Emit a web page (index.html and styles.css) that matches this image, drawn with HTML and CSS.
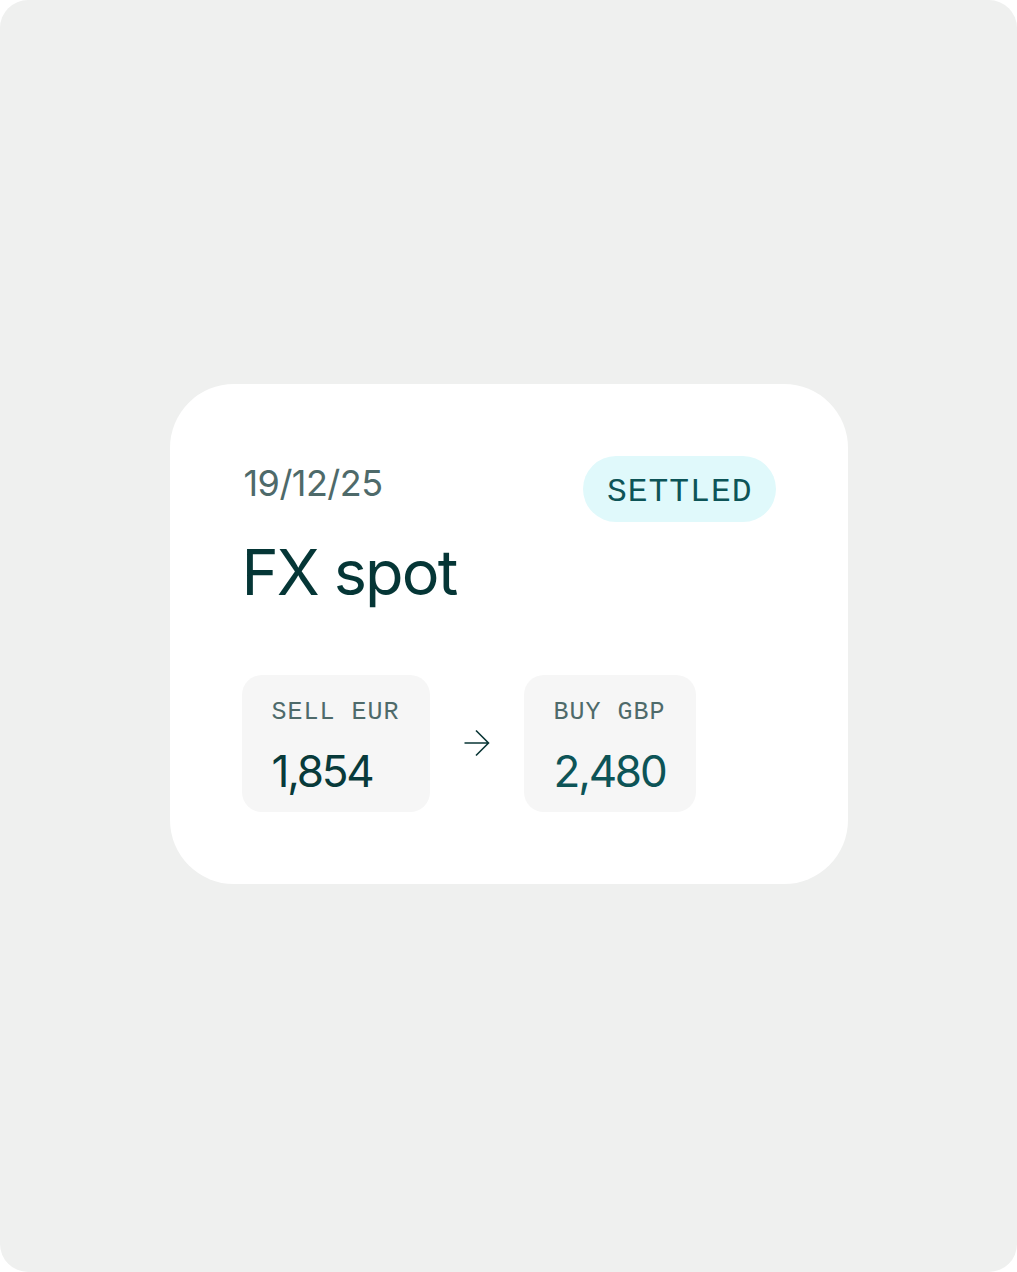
FILE: index.html
```html
<!DOCTYPE html>
<html>
<head>
    <meta charset='utf-8'>
    <title>FX spot</title>
    <meta name='viewport' content='width=device-width, initial-scale=1'>
    <link rel="stylesheet" href="styles.css">
</head>
<body>
    <div id="fundo">
        <div id="cartao">
            <div class="topo">
                <span class="data">19/12/25</span>
                <span class="status">SETTLED</span>
            </div>
            <h1 class="titulo">FX spot</h1>
            <div class="troca">
                <div class="caixa">
                    <div class="rotulo">SELL EUR</div>
                    <div class="valor">1,854</div>
                </div>
                <!-- seta entre as caixas -->
                <svg class="seta" width="26" height="28" viewBox="0 0 26 28" fill="none">
                    <path d="M0.5 14H24.5M12 1.5L24.5 14L12 26.5" stroke="#0a3636" stroke-width="1.6"/>
                </svg>
                <div class="caixa">
                    <div class="rotulo">BUY GBP</div>
                    <div class="valor compra">2,480</div>
                </div>
            </div>
        </div>
    </div>
</body>
</html>
```

FILE: styles.css
```css
html, body {
    margin: 0;
    padding: 0;
    background-color: white;
}
#fundo {
    display: flex;
    justify-content: center;
    align-items: center;
    height: 1272px;
    box-sizing: border-box;
    padding-bottom: 4px;
    background-color: rgb(239, 240, 239);
    border-radius: 28px;
}
#cartao {
    box-sizing: border-box;
    width: 678px;
    height: 500px;
    padding: 72px;
    background-color: white;
    border-radius: 64px;
}
.topo {
    display: flex;
    justify-content: space-between;
    align-items: flex-start;
}
.data {
    font-family: Inter, sans-serif;
    font-size: 36px;
    line-height: 55px;
    letter-spacing: -0.015em;
    color: rgb(78, 106, 106);
    margin-left: 2px;
}
.status {
    font-family: 'Liberation Mono', monospace;
    font-size: 33px;
    line-height: 38px;
    letter-spacing: 1px;
    color: rgb(13, 84, 87);
    background-color: rgb(224, 249, 251);
    border-radius: 40px;
    padding: 18px 23px 10px 24px;
}
.titulo {
    font-family: Inter, sans-serif;
    font-weight: 400;
    font-size: 63px;
    letter-spacing: -0.03em;
    line-height: 76px;
    color: rgb(5, 54, 54);
    margin: 12px 0 0 0;
}
.troca {
    display: flex;
    align-items: center;
    gap: 34px;
    margin-top: 65px;
}
.caixa {
    background-color: rgb(246, 246, 246);
    border-radius: 20px;
    padding: 22px 30px 15px 30px;
}
.rotulo {
    font-family: 'Liberation Mono', monospace;
    font-size: 25px;
    letter-spacing: 1px;
    line-height: 32px;
    color: rgb(78, 106, 106);
    white-space: nowrap;
}
.valor {
    font-family: Inter, sans-serif;
    font-size: 44px;
    letter-spacing: -0.05em;
    line-height: 52px;
    color: rgb(8, 58, 58);
    margin-top: 16px;
}
.compra {
    color: rgb(13, 84, 87);
}
.seta {
    margin-top: -2px;
}
```
